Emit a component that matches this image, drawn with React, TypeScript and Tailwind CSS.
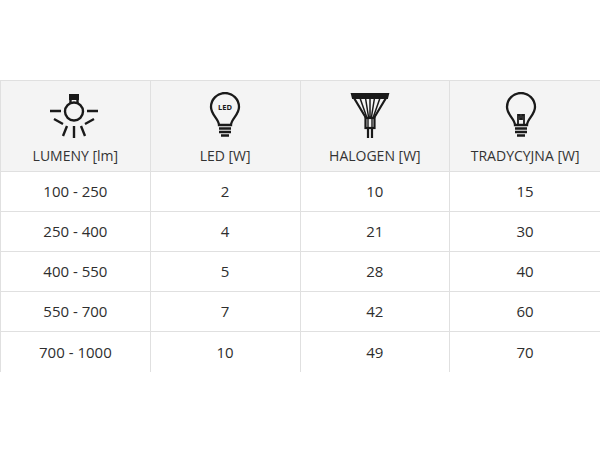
import React from "react";

const rows: [string, string, string, string][] = [
  ["100 - 250", "2", "10", "15"],
  ["250 - 400", "4", "21", "30"],
  ["400 - 550", "5", "28", "40"],
  ["550 - 700", "7", "42", "60"],
  ["700 - 1000", "10", "49", "70"],
];

const LumenIcon = () => (
  <svg width="52" height="46" viewBox="0 0 52 46" fill="none" stroke="#1a1a1a" strokeWidth="2.4">
    {/* cap */}
    <rect x="21" y="2" width="10" height="6" fill="#1a1a1a" stroke="none" />
    <path d="M22.5 8 V11 M29.5 8 V11" />
    {/* bulb */}
    <circle cx="26" cy="19.5" r="9" />
    {/* rays */}
    <path d="M2 19 H13 M39 19 H50" />
    <path d="M6 27 L15 32 M46 27 L37 32" />
    <path d="M19 34 L15 44 M33 34 L37 44" />
    <path d="M26 34 V46" />
  </svg>
);

const LedIcon = () => (
  <svg width="34" height="46" viewBox="0 0 34 46" fill="none" stroke="#1a1a1a" strokeWidth="2.3">
    <path d="M11 33 C11 27 3 23 3 15 A14 14 0 0 1 31 15 C31 23 23 27 23 33 Z" />
    <path d="M11 36.5 H23 M11 40 H23 M13 43.5 H21" />
    <text x="17" y="18" textAnchor="middle" fontSize="7.5" fontWeight="700" fill="#1a1a1a" stroke="none" fontFamily="'Open Sans', sans-serif">LED</text>
  </svg>
);

const HalogenIcon = () => (
  <svg width="42" height="46" viewBox="0 0 42 46" fill="none" stroke="#1a1a1a" strokeWidth="2.2">
    <path d="M3 2 H39 L38 6 H4 Z" fill="#1a1a1a" />
    <path d="M5 6 L17 26 H25 L37 6" />
    <path d="M11 6 L18 26 M16.5 6 L19.7 26 M21 6 V26 M25.5 6 L22.3 26 M31 6 L24 26" strokeWidth="1.5" />
    <rect x="16.5" y="26" width="9" height="10" />
    <path d="M19 26 V36 M23 26 V36" strokeWidth="1.4" />
    <path d="M19 36 V46 M23 36 V46" />
  </svg>
);

const BulbIcon = () => (
  <svg width="34" height="46" viewBox="0 0 34 46" fill="none" stroke="#1a1a1a" strokeWidth="2.3">
    <path d="M11 33 C11 27 3 23 3 15 A14 14 0 0 1 31 15 C31 23 23 27 23 33 Z" />
    <path d="M14 33 V23 H16 V27 H18 V23 H20 V33" strokeWidth="1.8" />
    <path d="M11 36.5 H23 M11 40 H23 M13 43.5 H21" />
  </svg>
);

const headers = [
  { label: "LUMENY [lm]", icon: <LumenIcon />, shift: "mr-[2px]" },
  { label: "LED [W]", icon: <LedIcon />, shift: "mr-[1px]" },
  { label: "HALOGEN [W]", icon: <HalogenIcon />, shift: "mr-[10px]" },
  { label: "TRADYCYJNA [W]", icon: <BulbIcon />, shift: "mr-[8px]" },
];

export default function App() {
  return (
    <div
      className="w-[600px] h-[450px] bg-white pt-[80px] text-[#2e2e2e]"
      style={{ fontFamily: "'Open Sans', 'Liberation Sans', sans-serif" }}
    >
      <div className="border-t border-l border-[#e0e0e0]">
        <div className="grid grid-cols-4 bg-[#f4f4f4] h-[91px] border-b border-[#e0e0e0]">
          {headers.map((h, i) => (
            <div
              key={h.label}
              className={`flex flex-col items-center pt-[11px] ${i < 3 ? "border-r border-[#e0e0e0]" : ""}`}
            >
              <div className={`h-[46px] flex items-end ${h.shift}`}>{h.icon}</div>
              <div className="mt-[9px] text-[14px] leading-[17px] text-[#333333]">{h.label}</div>
            </div>
          ))}
        </div>
        {rows.map((r, ri) => (
          <div
            key={ri}
            className={`grid grid-cols-4 h-[40px] ${ri < rows.length - 1 ? "border-b border-[#e0e0e0]" : ""}`}
          >
            {r.map((c, ci) => (
              <div
                key={ci}
                className={`flex items-center justify-center text-[15px] ${ci < 3 ? "border-r border-[#e0e0e0]" : ""}`}
              >
                {c}
              </div>
            ))}
          </div>
        ))}
      </div>
    </div>
  );
}
